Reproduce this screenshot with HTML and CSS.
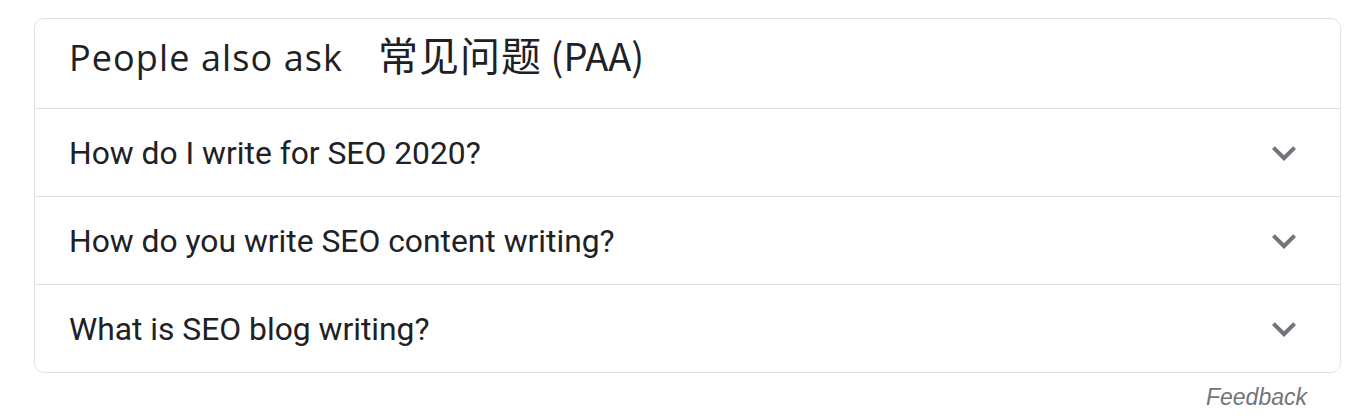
FILE: index.html
```html
<!DOCTYPE html>
<html lang="en">
<head>
<meta charset="utf-8">
<title>People also ask</title>
<link rel="stylesheet" href="styles.css">
</head>
<body>
<div class="page">
  <section class="paa">
    <div class="paa-head">
      <span class="paa-title">People also ask</span>
      <span class="paa-note"><span class="paa-cjk">常见问题</span> (PAA)</span>
    </div>
    <div class="paa-row">
      <span class="paa-q">How do I write for SEO 2020?</span>
      <svg class="chev" viewBox="0 0 24 24" width="48" height="48"><path d="M16.59 8.59L12 13.17 7.41 8.59 6 10l6 6 6-6z"/></svg>
    </div>
    <div class="paa-row">
      <span class="paa-q">How do you write SEO content writing?</span>
      <svg class="chev" viewBox="0 0 24 24" width="48" height="48"><path d="M16.59 8.59L12 13.17 7.41 8.59 6 10l6 6 6-6z"/></svg>
    </div>
    <div class="paa-row">
      <span class="paa-q">What is SEO blog writing?</span>
      <svg class="chev" viewBox="0 0 24 24" width="48" height="48"><path d="M16.59 8.59L12 13.17 7.41 8.59 6 10l6 6 6-6z"/></svg>
    </div>
  </section>
  <div class="feedback-bar"><span class="feedback">Feedback</span></div>
</div>
</body>
</html>
```
FILE: styles.css
```css
html, body {
  margin: 0;
  padding: 0;
  background: #ffffff;
}
.page {
  padding: 18px 21px 0 34px;
}
.paa {
  border: 1px solid #dfe1e5;
  border-radius: 10px;
  overflow: hidden;
}
.paa-head {
  display: flex;
  align-items: baseline;
  padding: 13px 0 0 34px;
  gap: 35px;
  box-sizing: border-box;
  border-bottom: 1px solid #dfe1e5;
  height: 90px;
}
.paa-title {
  font-family: "Open Sans", sans-serif;
  font-size: 36px;
  line-height: 44px;
  color: #202124;
  letter-spacing: 1.1px;
}
.paa-note {
  font-family: "Noto Sans CJK SC", "Noto Sans", sans-serif;
  font-size: 38px;
  line-height: 44px;
  color: #202124;
}
.paa-cjk {
  font-size: 40px;
  line-height: 44px;
  letter-spacing: 1px;
}
.paa-row {
  display: flex;
  align-items: center;
  justify-content: space-between;
  height: 88px;
  box-sizing: border-box;
  padding: 0 32px 0 34px;
  border-bottom: 1px solid #dfe1e5;
}
.paa-row:last-child {
  border-bottom: none;
  height: 87px;
}
.paa-q {
  font-family: Roboto, "Liberation Sans", sans-serif;
  font-size: 31.8px;
  color: #202124;
}
.chev {
  fill: #70757a;
  display: block;
}
.feedback-bar {
  display: flex;
  justify-content: flex-end;
  padding-right: 34px;
  padding-top: 11px;
}
.feedback {
  font-family: "Liberation Sans", Arial, sans-serif;
  font-style: italic;
  font-size: 23px;
  color: #70757a;
}
```
